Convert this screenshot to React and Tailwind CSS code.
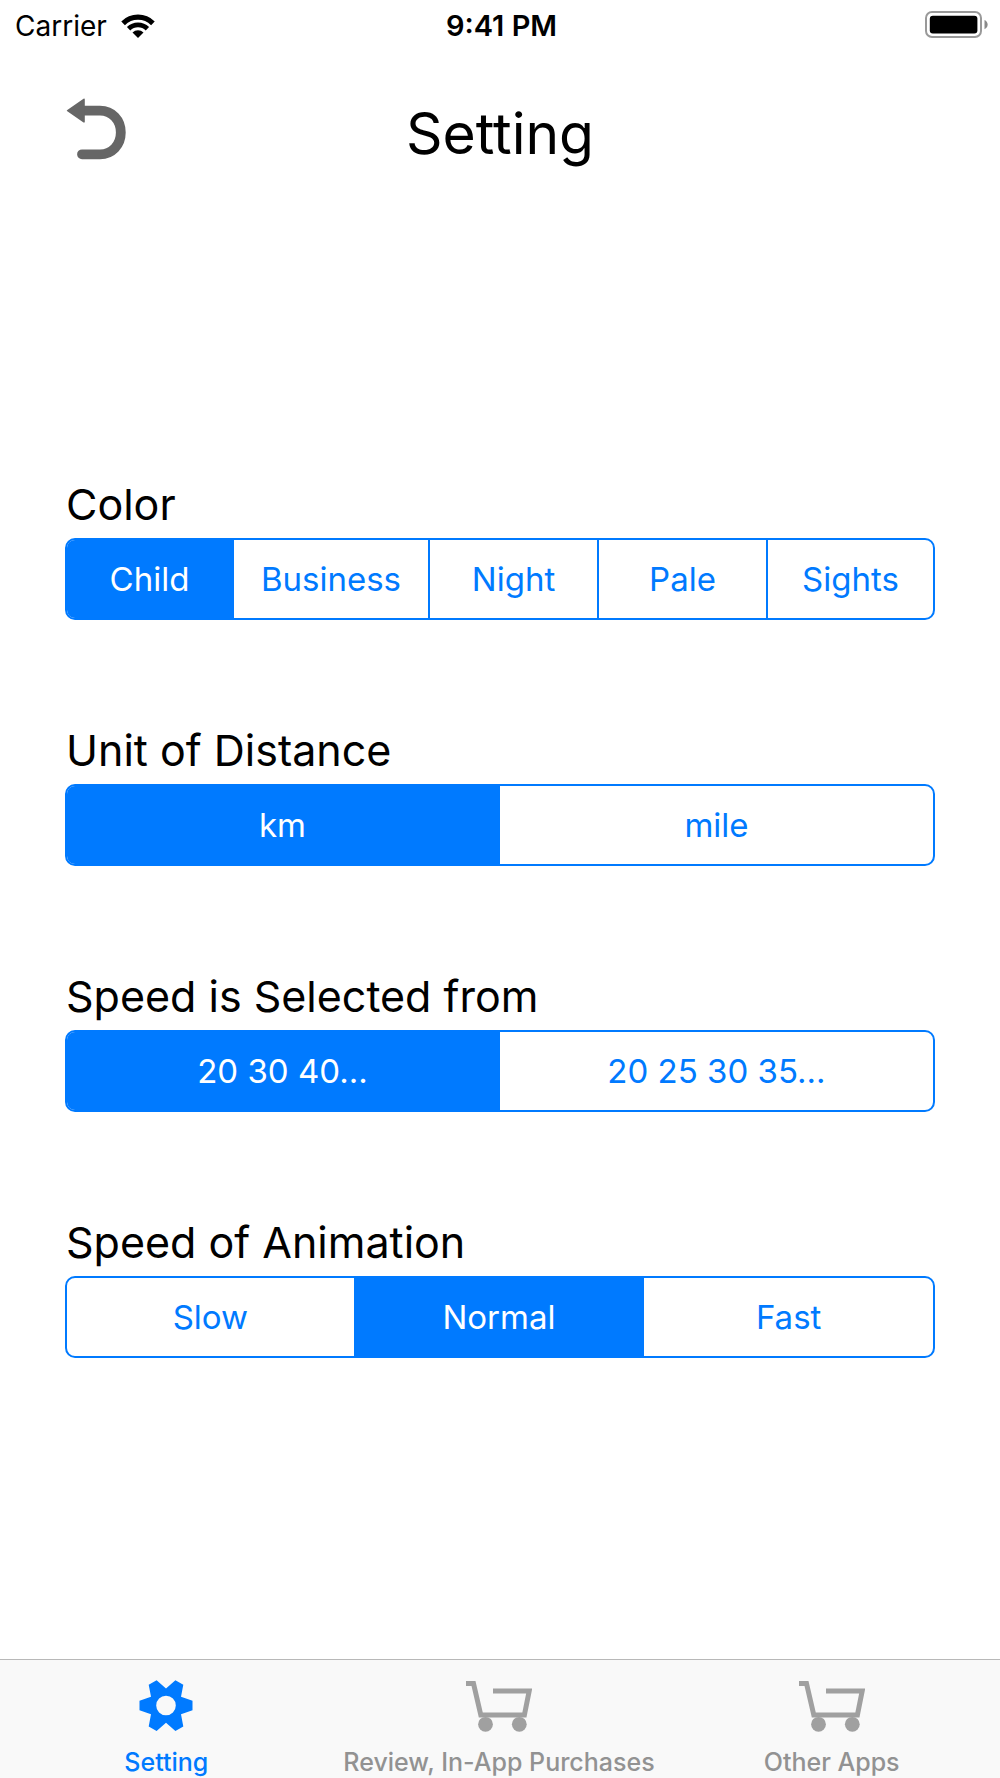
import React, { useState } from "react";

const groups = [
  {
    id: "color",
    label: "Color",
    options: ["Child", "Business", "Night", "Pale", "Sights"],
    initial: 0,
    columns: "grid-cols-[167fr_196fr_169fr_169fr_165fr]",
  },
  {
    id: "unit",
    label: "Unit of Distance",
    options: ["km", "mile"],
    initial: 0,
    columns: "grid-cols-2",
  },
  {
    id: "speed",
    label: "Speed is Selected from",
    options: ["20 30 40...", "20 25 30 35..."],
    initial: 0,
    columns: "grid-cols-2",
  },
  {
    id: "animation",
    label: "Speed of Animation",
    options: ["Slow", "Normal", "Fast"],
    initial: 1,
    columns: "grid-cols-3",
  },
];

function WifiIcon() {
  return (
    <svg className="h-6 w-[34px]" viewBox="0 0 34 24" fill="none" aria-hidden="true">
      <path d="M2.1 9.3A21.200 21.200 0 0 1 31.900 9.300" stroke="#000" strokeWidth="5.2" />
      <path d="M7.600 14.800A13.400 13.400 0 0 1 26.400 14.800" stroke="#000" strokeWidth="4.800" />
      <path d="M11.500 18.400A7.800 7.800 0 0 1 22.500 18.400L17 24Z" fill="#000" />
    </svg>
  );
}

function BatteryIcon() {
  return (
    <svg className="h-7 w-[63px]" viewBox="0 0 63 28" aria-label="Battery full" role="img">
      <rect x="1" y="1" width="55" height="25" rx="6" fill="none" stroke="#999" strokeWidth="2" />
      <rect x="4.8" y="4.8" width="47.6" height="17.6" rx="3" fill="#000" />
      <path d="M59.5 9c4.2 1.600 4.200 7.600 0 9.200Z" fill="#8a8a8a" />
    </svg>
  );
}

function BackIcon() {
  return (
    <svg className="h-[62px] w-[60px]" viewBox="0 0 60 62" aria-hidden="true">
      <path d="M17 12.700H34C46 12.700 54.800 22 54.800 34.500S46 56.300 34 56.300H16" fill="none" stroke="#666" strokeWidth="9.800" strokeLinecap="round" />
      <path d="M1.300 11.900L17.500 0.700q1.300 -0.600 1.300 0.800V23.700q0 1.300 -1.300 0.700L1.300 13.300q-1.200 -0.700 0 -1.400Z" fill="#666" />
    </svg>
  );
}

function GearIcon() {
  return (
    <svg className="h-[52px] w-[54px]" viewBox="0 0 54 52" aria-hidden="true">
      <path
        fillRule="evenodd"
        fill="currentColor"
        d="M17.600 0.300L27 8.500L36.400 0.300L44.300 4.700L42 16.800L53.500 20.800V30.300L42 34.200L44.300 46.500L36.400 51L27 42.700L17.600 51L9.700 46.500L12 34.200L0.500 30.300V20.800L12 16.800L9.700 4.700ZM27 15.700a9.800 9.800 0 1 0 0 19.600a9.800 9.800 0 1 0 0 -19.600Z"
      />
    </svg>
  );
}

function CartIcon() {
  return (
    <svg className="h-[52px] w-[66px]" viewBox="0 0 66 52" aria-hidden="true">
      <path d="M0 3.500H7.500L14.800 35H58.400L63.200 11H27" fill="none" stroke="#a0a0a0" strokeWidth="5" />
      <circle cx="19.500" cy="44.300" r="7.400" fill="#a0a0a0" />
      <circle cx="53.300" cy="44.300" r="7.400" fill="#a0a0a0" />
    </svg>
  );
}

function SegmentedGroup({ group }) {
  const [selected, setSelected] = useState(group.initial);
  return (
    <section className="flex flex-col gap-[6px]">
      <h2 id={group.id} className="px-px text-[43px] leading-[56px]">{group.label}</h2>
      <div
        role="radiogroup"
        aria-labelledby={group.id}
        className={"grid h-[82px] divide-x-2 divide-[#007aff] overflow-hidden rounded-[10px] border-2 border-[#007aff] " + group.columns}
      >
        {group.options.map((option, i) => (
          <label
            key={option}
            className="relative flex cursor-pointer items-center justify-center text-[33px] leading-10 whitespace-nowrap text-[#007aff] has-checked:bg-[#007aff] has-checked:text-white"
          >
            <input
              type="radio"
              name={group.id}
              className="sr-only"
              checked={selected === i}
              onChange={() => setSelected(i)}
            />
            {option}
          </label>
        ))}
      </div>
    </section>
  );
}

const tabs = [
  { label: "Setting", Icon: GearIcon, active: true },
  { label: "Review, In-App Purchases", Icon: CartIcon },
  { label: "Other Apps", Icon: CartIcon },
];

export default function App() {
  return (
    <div className="flex min-h-screen flex-col bg-white font-[Inter,'Liberation_Sans',sans-serif] text-black">
      <div className="grid grid-cols-[1fr_auto_1fr] items-start pt-2 pr-3 pl-[15px] text-[28px] leading-9">
        <div className="flex items-center gap-[14px]">
          <span>Carrier</span>
          <WifiIcon />
        </div>
        <span className="text-[29px] leading-9 font-semibold">9:41 PM</span>
        <div className="flex justify-end pt-[3px]">
          <BatteryIcon />
        </div>
      </div>

      <header className="grid grid-cols-[1fr_auto_1fr] items-start px-[66px] pt-[54px]">
        <button type="button" aria-label="Back" className="w-fit cursor-pointer">
          <BackIcon />
        </button>
        <h1 className="text-[57px] leading-[72px]">Setting</h1>
      </header>

      <main className="flex flex-1 flex-col gap-[102px] px-[65px] pt-[306px] pb-20">
        {groups.map((group) => (
          <SegmentedGroup key={group.id} group={group} />
        ))}
      </main>

      <nav className="grid grid-cols-3 border-t border-[#b8b8b8] bg-[#f9f9f9] pt-5 pr-[2px]">
        {tabs.map(({ label, Icon, active }) => (
          <button
            key={label}
            type="button"
            aria-current={active ? "page" : undefined}
            className="flex cursor-pointer flex-col items-center gap-[14px] text-[25px] leading-8 font-medium whitespace-nowrap text-[#929292] aria-[current=page]:text-[#007aff]"
          >
            <Icon />
            {label}
          </button>
        ))}
      </nav>
    </div>
  );
}
